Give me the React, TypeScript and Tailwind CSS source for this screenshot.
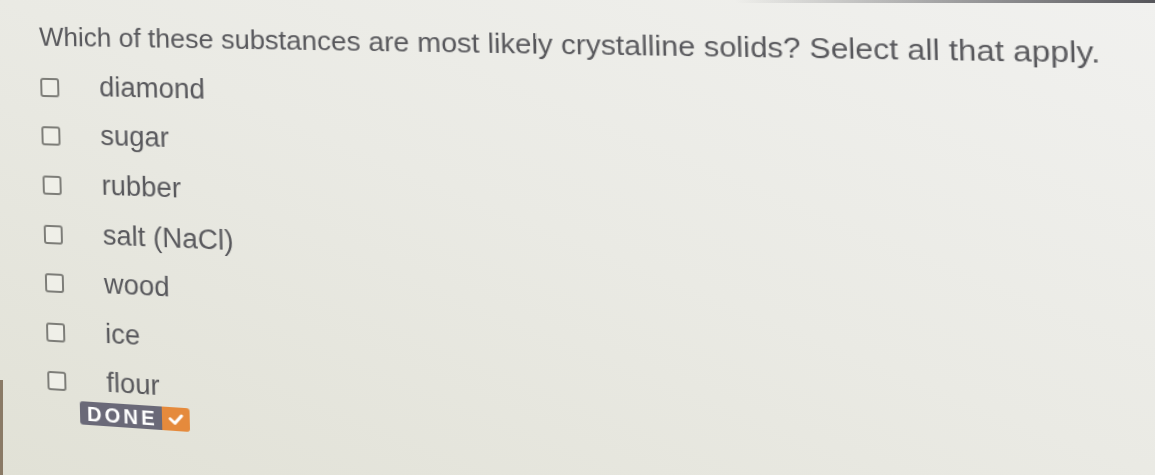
import React from "react";

const options = ["diamond", "sugar", "rubber", "salt (NaCl)", "wood", "ice", "flour"];

const App: React.FC = () => {
  return (
    <div
      className="w-[1155px] h-[475px] overflow-hidden bg-linear-to-bl from-[#f1f1ef] via-[#eaeae4] to-[#e1e1d6] text-[#58585c] relative"
      style={{ fontFamily: '"Liberation Sans", Arial, sans-serif' }}
    >
      <div className="absolute top-0 right-0 h-[3px] w-[420px] bg-linear-to-r from-transparent to-[#55555a]" />
      <div className="absolute left-0 top-[380px] bottom-0 w-[3px] bg-[#8a7a66]" />

      {/* photo was taken at an angle, so the content is slightly in perspective */}
      <div className="pl-[40px] pt-[19px] origin-[0px_45px] [transform:perspective(1500px)_rotateY(-12deg)_skewX(1.4deg)_skewY(0.9deg)]">
        <h1 className="text-[26px] leading-[34px] whitespace-nowrap">
          Which of these substances are most likely crystalline solids? Select all that apply.
        </h1>

        <div className="flex flex-col mt-[9px]">
          {options.map((opt) => (
            <label key={opt} className="flex items-center h-[48.6px] gap-[40px]">
              <span className="w-[19px] h-[19px] rounded-[3px] border-2 border-[#7d7d78] bg-[#efefe8] shrink-0" />
              <span className="text-[27px] leading-none pb-[2px]">{opt}</span>
            </label>
          ))}
        </div>

        <button className="-mt-[6px] ml-[32px] flex items-stretch h-[23px] rounded-[3px] overflow-hidden">
          <span className="bg-[#6a6978] text-white font-bold text-[20px] tracking-[3px] pl-[7px] pr-[4px] flex items-center">
            DONE
          </span>
          <span className="bg-[#e58a3c] w-[27px] flex items-center justify-center">
            <svg width="15" height="12" viewBox="0 0 15 12">
              <path d="M2 5.5 L6.5 9.5 L13 2" fill="none" stroke="#fff" strokeWidth="3" strokeLinecap="round" strokeLinejoin="round" />
            </svg>
          </span>
        </button>
      </div>
    </div>
  );
};

export default App;
